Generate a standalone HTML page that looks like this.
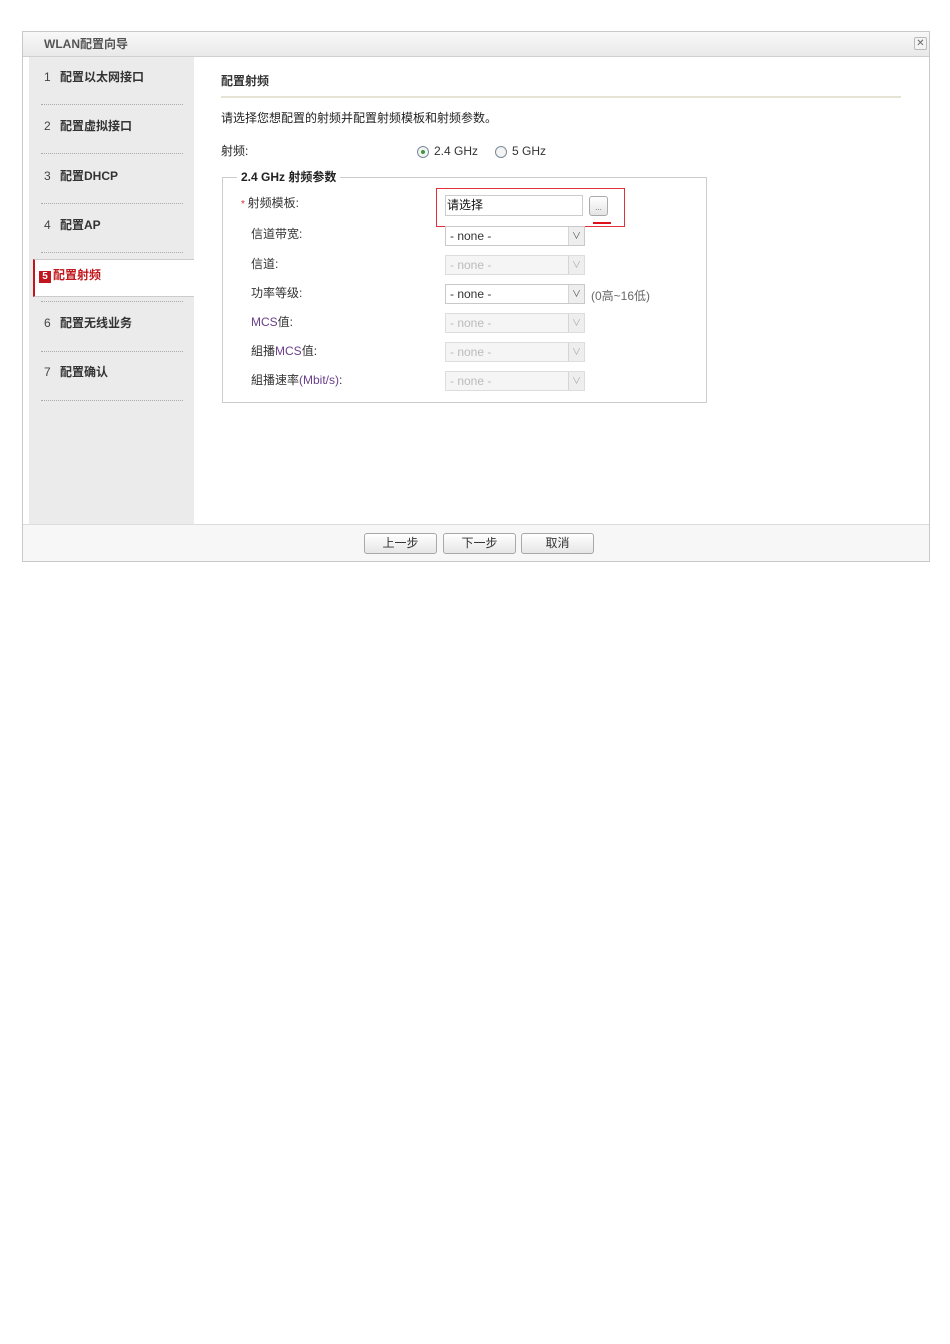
<!DOCTYPE html>
<html><head><meta charset="utf-8"><style>
*{margin:0;padding:0;box-sizing:border-box}
body{width:950px;height:1344px;background:#fff;position:relative;font-family:"Liberation Sans","Noto Sans CJK SC",sans-serif;font-size:12px;color:#222}
.a{position:absolute}
.dlg{left:22px;top:31px;width:908px;height:531px;border:1px solid #c8c8c8;background:#fff}
.title{left:0;top:0;width:906px;height:25px;background:linear-gradient(#f8f8f8,#e9e9e9);border-bottom:1px solid #d0d0d0}
.side{left:6px;top:25px;width:165px;height:467px;background:#ebebeb}
.nav{left:15px;font-weight:bold;color:#333;font-size:12px}
.nav b{display:inline-block;width:16px;font-weight:normal;color:#444}
.dot{left:12px;width:142px;border-top:1px dotted #aaa}
.lbl{left:228px;font-size:12px;color:#333}
.sel{left:422px;width:140px;height:20px;border:1px solid #c9c9c9;background:#fff;font-size:12px;padding:2px 4px;color:#333}
.sel.dis{background:#f5f5f5;color:#bbb;border-color:#ddd}
.sel i{position:absolute;right:0;top:0;width:16px;height:18px;background:#eee;border-left:1px solid #d5d5d5;font-style:normal;font-size:9px;color:#555;text-align:center;line-height:18px}
.sel.dis i{color:#aaa}
.btn{top:501px;width:73px;height:21px;border:1px solid #a8a8a8;border-radius:3px;background:linear-gradient(#fff,#e6e6e6);text-align:center;line-height:19px;font-size:12px;color:#333}
.rad{width:12px;height:12px;border:1px solid #7a8a9a;border-radius:50%;background:#f4f4f4}
</style></head><body>
<div class="a dlg">
 <div class="a title"><span class="a" style="left:21px;top:3px;font-weight:bold;color:#555;font-size:12px">WLAN配置向导</span>
  <div class="a" style="left:891px;top:5px;width:13px;height:13px;border:1px solid #bbb;border-radius:2px;background:#f4f4f4;font-size:10px;line-height:11px;text-align:center;color:#666">✕</div></div>
 <div class="a side">
  <div class="a nav" style="top:11px"><b>1</b>配置以太网接口</div>
  <div class="a dot" style="top:47px"></div>
  <div class="a nav" style="top:60px"><b>2</b>配置虚拟接口</div>
  <div class="a dot" style="top:96px"></div>
  <div class="a nav" style="top:110px"><b>3</b>配置DHCP</div>
  <div class="a dot" style="top:146px"></div>
  <div class="a nav" style="top:159px"><b>4</b>配置AP</div>
  <div class="a dot" style="top:195px"></div>
  <div class="a" style="left:4px;top:202px;width:161px;height:38px;background:#fff;border-left:2px solid #c0161c;border-top:1px solid #ccc;border-bottom:1px solid #ccc"></div>
  <div class="a" style="left:10px;top:209px;font-weight:bold;color:#c0161c"><span style="display:inline-block;width:12px;height:12px;background:#c0161c;color:#fff;font-size:10px;text-align:center;line-height:12px;margin-right:2px">5</span>配置射频</div>
  <div class="a dot" style="top:244px"></div>
  <div class="a nav" style="top:257px"><b>6</b>配置无线业务</div>
  <div class="a dot" style="top:294px"></div>
  <div class="a nav" style="top:306px"><b>7</b>配置确认</div>
  <div class="a dot" style="top:343px"></div>
 </div>
 <div class="a" style="left:198px;top:40px;font-weight:bold;color:#333">配置射频</div>
 <div class="a" style="left:198px;top:64px;width:680px;border-top:2px solid #e6e2d6"></div>
 <div class="a" style="left:198px;top:77px;color:#222">请选择您想配置的射频并配置射频模板和射频参数。</div>
 <div class="a" style="left:198px;top:110px;color:#222">射频:</div>
 <div class="a rad" style="left:394px;top:114px"><div class="a" style="left:3px;top:3px;width:4px;height:4px;border-radius:50%;background:#3a9a3a"></div></div>
 <div class="a" style="left:411px;top:112px;color:#333">2.4 GHz</div>
 <div class="a rad" style="left:472px;top:114px"></div>
 <div class="a" style="left:489px;top:112px;color:#333">5 GHz</div>
 <div class="a" style="left:199px;top:145px;width:485px;height:226px;border:1px solid #ccc"></div>
 <div class="a" style="left:214px;top:136px;background:#fff;padding:0 4px;font-weight:bold;color:#222">2.4 GHz 射频参数</div>
 <div class="a" style="left:218px;top:162px;color:#333"><span style="color:#d33;font-size:10px">* </span>射频模板:</div>
 <div class="a" style="left:413px;top:156px;width:189px;height:39px;border:1px solid #e0303a"></div>
 <div class="a" style="left:422px;top:163px;width:138px;height:21px;border:1px solid #ccc;background:#fff;padding:0 1px;color:#111">请选择</div>
 <div class="a" style="left:566px;top:164px;width:19px;height:20px;border:1px solid #aaa;border-radius:3px;background:linear-gradient(#fff,#e4e4e4);font-size:8px;text-align:center;line-height:22px;color:#666">...</div>
 <div class="a" style="left:570px;top:190px;width:18px;height:2px;background:#e0101a"></div>
 <div class="a lbl" style="top:193px">信道带宽:</div>
 <div class="a sel" style="top:194px">- none -<i>∨</i></div>
 <div class="a lbl" style="top:223px">信道:</div>
 <div class="a sel dis" style="top:223px">- none -<i>∨</i></div>
 <div class="a lbl" style="top:252px">功率等级:</div>
 <div class="a sel" style="top:252px">- none -<i>∨</i></div>
 <div class="a" style="left:568px;top:255px;color:#666">(0高~16低)</div>
 <div class="a lbl" style="top:281px"><span style="color:#6a3f8a">MCS</span>值:</div>
 <div class="a sel dis" style="top:281px">- none -<i>∨</i></div>
 <div class="a lbl" style="top:310px">組播<span style="color:#6a3f8a">MCS</span>值:</div>
 <div class="a sel dis" style="top:310px">- none -<i>∨</i></div>
 <div class="a lbl" style="top:339px">組播速率<span style="color:#6a3f8a">(Mbit/s)</span>:</div>
 <div class="a sel dis" style="top:339px">- none -<i>∨</i></div>
 <div class="a" style="left:0;top:492px;width:906px;height:37px;background:#f7f7f7;border-top:1px solid #ddd"></div>
 <div class="a btn" style="left:341px">上一步</div>
 <div class="a btn" style="left:420px">下一步</div>
 <div class="a btn" style="left:498px">取消</div>
</div>
</body></html>
